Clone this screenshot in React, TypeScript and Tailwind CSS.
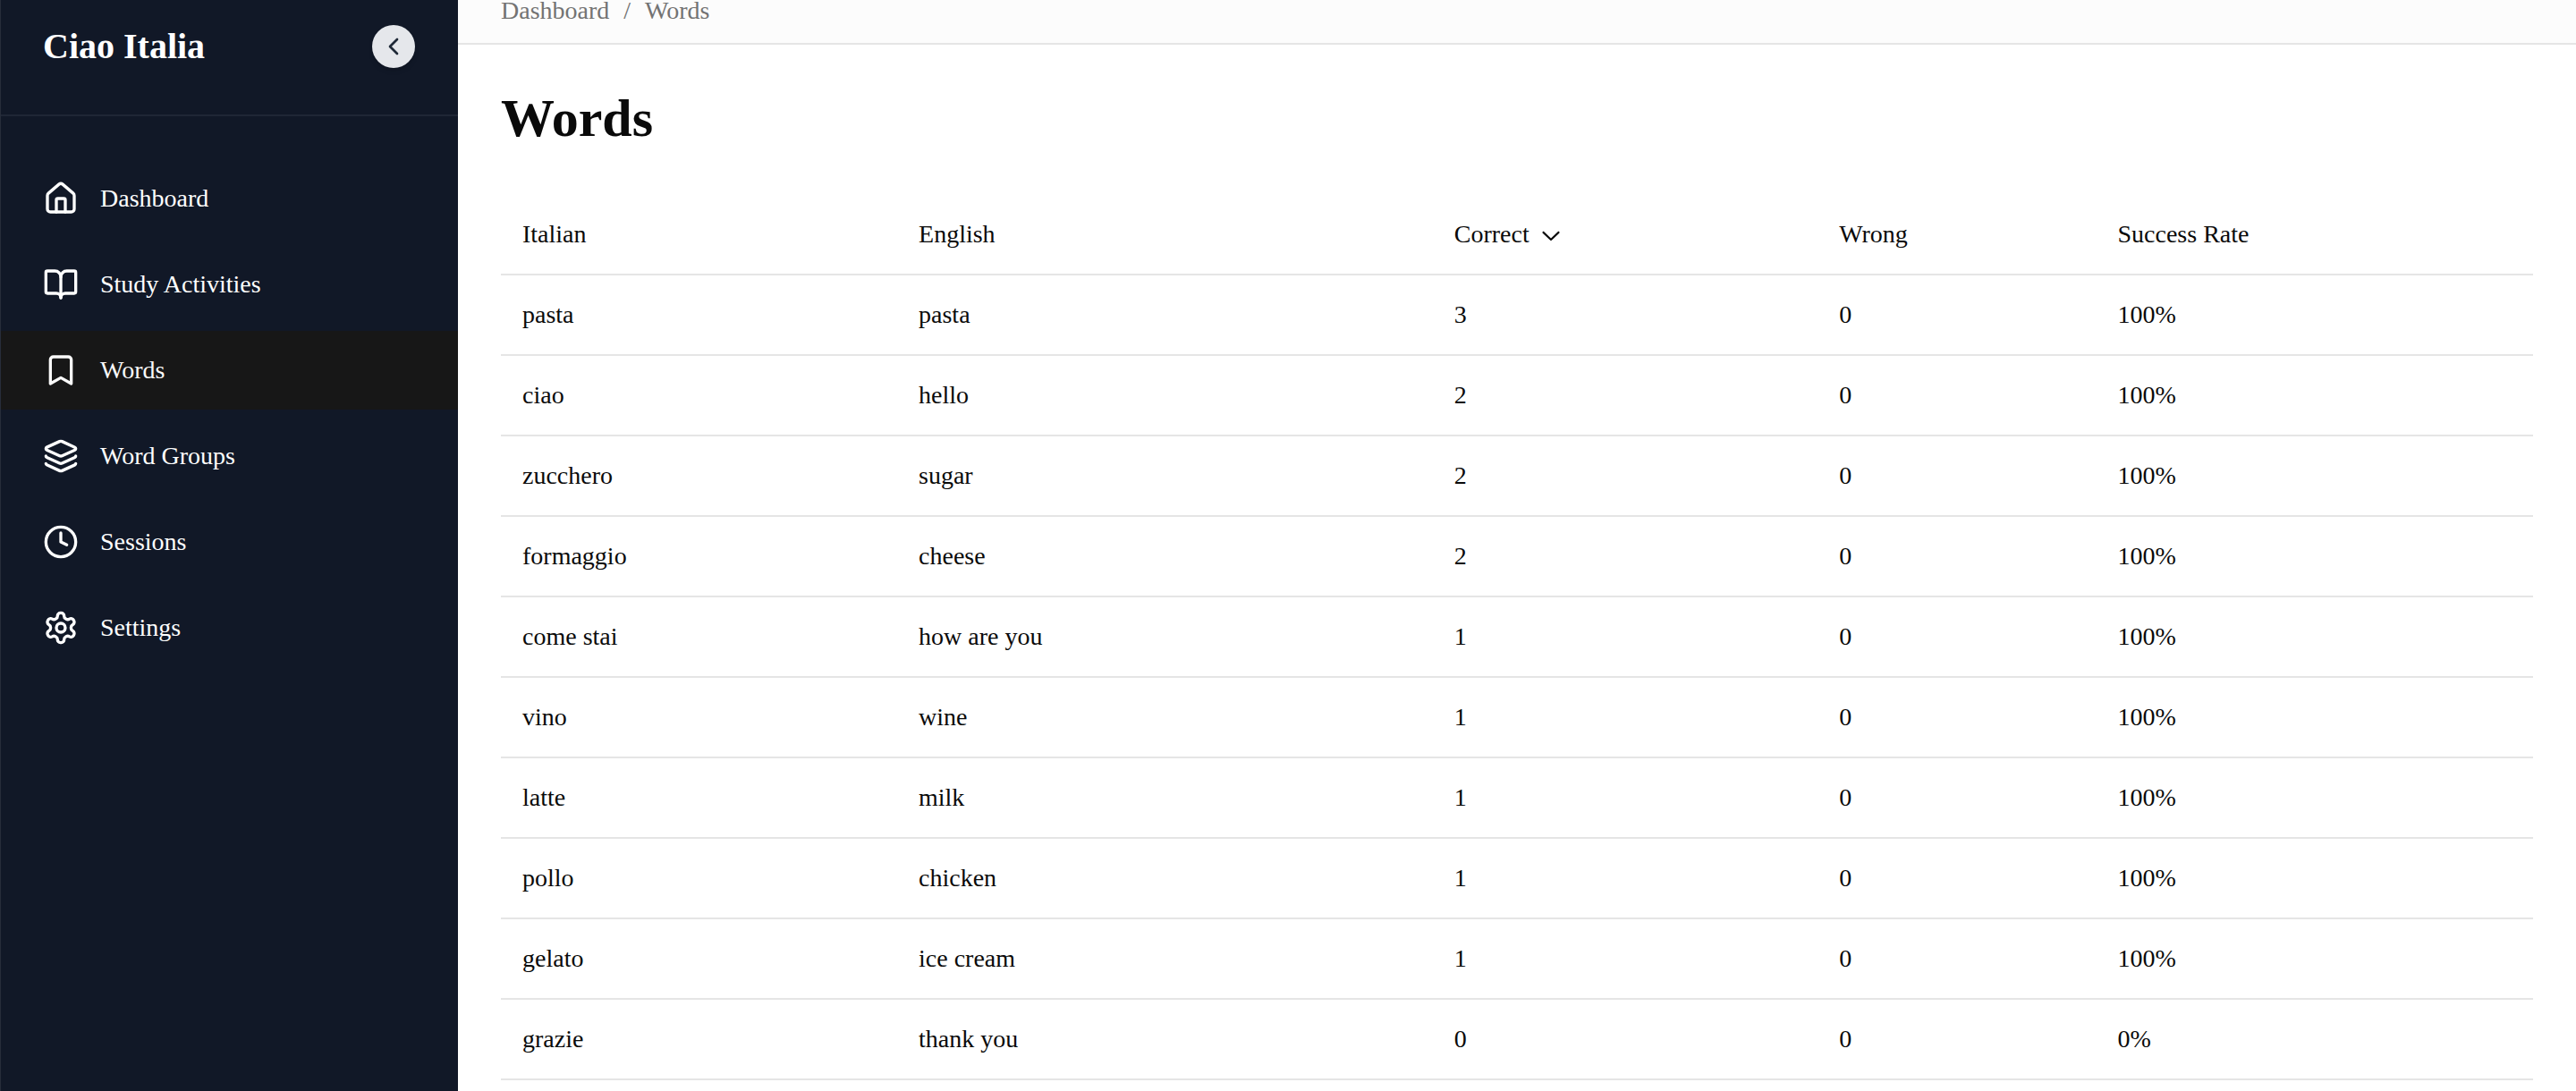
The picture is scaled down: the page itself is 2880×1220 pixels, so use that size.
import { BookOpen, Bookmark, ChevronLeft, Clock, Layers, type LucideIcon } from "lucide-react";
import type { ReactNode } from "react";

function Glyph({ children }: { children: ReactNode }) {
  return (
    <svg
      viewBox="0 0 24 24"
      fill="none"
      stroke="currentColor"
      strokeWidth="2"
      strokeLinecap="round"
      strokeLinejoin="round"
      className="size-10 shrink-0"
      aria-hidden="true"
    >
      {children}
    </svg>
  );
}

function SortDownIcon() {
  return (
    <svg viewBox="0 0 15 15" fill="currentColor" className="size-8 shrink-0" aria-hidden="true">
      <path
        fillRule="evenodd"
        clipRule="evenodd"
        d="M3.13523 6.15803C3.3241 5.95657 3.64052 5.94637 3.84197 6.13523L7.5 9.56464L11.158 6.13523C11.3595 5.94637 11.6759 5.95657 11.8648 6.15803C12.0536 6.35949 12.0434 6.67591 11.842 6.86477L7.84197 10.6148C7.64964 10.7951 7.35036 10.7951 7.15803 10.6148L3.15803 6.86477C2.95657 6.67591 2.94637 6.35949 3.13523 6.15803Z"
      />
    </svg>
  );
}

const lucide = (Icon: LucideIcon) => <Icon className="size-10 shrink-0" aria-hidden="true" />;

const navItems: { label: string; icon: ReactNode; active?: boolean }[] = [
  {
    label: "Dashboard",
    icon: (
      <Glyph>
        <path d="M15 21v-8a1 1 0 0 0-1-1h-4a1 1 0 0 0-1 1v8" />
        <path d="M3 10a2 2 0 0 1 .709-1.528l7-5.999a2 2 0 0 1 2.582 0l7 5.999A2 2 0 0 1 21 10v9a2 2 0 0 1-2 2H5a2 2 0 0 1-2-2z" />
      </Glyph>
    ),
  },
  { label: "Study Activities", icon: lucide(BookOpen) },
  { label: "Words", icon: lucide(Bookmark), active: true },
  { label: "Word Groups", icon: lucide(Layers) },
  {
    label: "Sessions",
    icon: lucide(Clock),
  },
  {
    label: "Settings",
    icon: (
      <Glyph>
        <path d="M12.22 2h-.44a2 2 0 0 0-2 2v.18a2 2 0 0 1-1 1.73l-.43.25a2 2 0 0 1-2 0l-.15-.08a2 2 0 0 0-2.73.73l-.22.38a2 2 0 0 0 .73 2.73l.15.1a2 2 0 0 1 1 1.72v.51a2 2 0 0 1-1 1.74l-.15.09a2 2 0 0 0-.73 2.73l.22.38a2 2 0 0 0 2.73.73l.15-.08a2 2 0 0 1 2 0l.43.25a2 2 0 0 1 1 1.73V20a2 2 0 0 0 2 2h.44a2 2 0 0 0 2-2v-.18a2 2 0 0 1 1-1.73l.43-.25a2 2 0 0 1 2 0l.15.08a2 2 0 0 0 2.73-.73l.22-.39a2 2 0 0 0-.73-2.73l-.15-.08a2 2 0 0 1-1-1.74v-.5a2 2 0 0 1 1-1.74l.15-.09a2 2 0 0 0 .73-2.73l-.22-.38a2 2 0 0 0-2.73-.73l-.15.08a2 2 0 0 1-2 0l-.43-.25a2 2 0 0 1-1-1.73V4a2 2 0 0 0-2-2z" />
        <circle cx="12" cy="12" r="3" />
      </Glyph>
    ),
  },
];

const words = [
  { italian: "pasta", english: "pasta", correct: 3, wrong: 0, rate: "100%" },
  { italian: "ciao", english: "hello", correct: 2, wrong: 0, rate: "100%" },
  { italian: "zucchero", english: "sugar", correct: 2, wrong: 0, rate: "100%" },
  { italian: "formaggio", english: "cheese", correct: 2, wrong: 0, rate: "100%" },
  { italian: "come stai", english: "how are you", correct: 1, wrong: 0, rate: "100%" },
  { italian: "vino", english: "wine", correct: 1, wrong: 0, rate: "100%" },
  { italian: "latte", english: "milk", correct: 1, wrong: 0, rate: "100%" },
  { italian: "pollo", english: "chicken", correct: 1, wrong: 0, rate: "100%" },
  { italian: "gelato", english: "ice cream", correct: 1, wrong: 0, rate: "100%" },
  { italian: "grazie", english: "thank you", correct: 0, wrong: 0, rate: "0%" },
];

const columns = [
  { label: "Italian", width: "w-[19.5%]" },
  { label: "English", width: "w-[26.35%]" },
  { label: "Correct", width: "w-[18.95%]", sorted: true },
  { label: "Wrong", width: "w-[13.7%]" },
  { label: "Success Rate", width: "w-[21.5%]" },
];

function Sidebar() {
  return (
    <aside className="w-lg shrink-0 border-l border-[#272d3a] bg-[#111827] text-white">
      <div className="flex items-start justify-between border-b-2 border-[#1f2635] pt-7 pr-12 pb-[52px] pl-[47px]">
        <div className="text-[40px] leading-12 font-bold">Ciao Italia</div>
        <button
          type="button"
          aria-label="Collapse sidebar"
          className="flex size-12 items-center justify-center rounded-full bg-[#e5e7eb] text-[#1f2937] shadow-md"
        >
          <ChevronLeft className="size-8" aria-hidden="true" />
        </button>
      </div>
      <nav className="flex flex-col gap-2 pt-12" aria-label="Main">
        {navItems.map((item) => (
          <a
            key={item.label}
            href="#"
            aria-current={item.active ? "page" : undefined}
            className={
              item.active
                ? "flex h-22 items-center gap-6 bg-[#171717] pl-[47px] text-[#fafafa]"
                : "flex h-22 items-center gap-6 pl-[47px]"
            }
          >
            {item.icon}
            {item.label}
          </a>
        ))}
      </nav>
    </aside>
  );
}

function WordsTable() {
  return (
    <table className="w-full table-fixed text-left">
      <thead>
        <tr className="border-b-2 border-[#e5e5e5]">
          {columns.map((col) => (
            <th
              key={col.label}
              scope="col"
              aria-sort={col.sorted ? "descending" : undefined}
              className={`${col.width} px-6 py-6 font-normal`}
            >
              <button type="button" className="flex items-center gap-2">
                {col.label}
                {col.sorted && <SortDownIcon />}
              </button>
            </th>
          ))}
        </tr>
      </thead>
      <tbody>
        {words.map((w) => (
          <tr key={w.italian} className="border-b-2 border-[#e5e5e5]">
            <td className="px-6 py-6">{w.italian}</td>
            <td className="px-6 py-6">{w.english}</td>
            <td className="px-6 py-6">{w.correct}</td>
            <td className="px-6 py-6">{w.wrong}</td>
            <td className="px-6 py-6">{w.rate}</td>
          </tr>
        ))}
      </tbody>
    </table>
  );
}

export default function App() {
  return (
    <div className="flex h-screen overflow-hidden bg-white font-['Liberation_Serif','Times_New_Roman',serif] text-[28px] leading-10 text-[#0a0a0a]">
      <Sidebar />
      <div className="min-w-0 flex-1">
        <header className="border-b-2 border-[#e5e5e5] bg-[#fcfcfc] px-12 pb-6">
          <nav aria-label="Breadcrumb" className="flex gap-4 leading-6 text-[#737373]">
            <a href="#">Dashboard</a>
            <span>/</span>
            <a href="#" aria-current="page">
              Words
            </a>
          </nav>
        </header>
        <main className="p-12">
          <h1 className="mb-[52px] text-[60px] leading-[68px] font-bold">Words</h1>
          <WordsTable />
        </main>
      </div>
    </div>
  );
}
